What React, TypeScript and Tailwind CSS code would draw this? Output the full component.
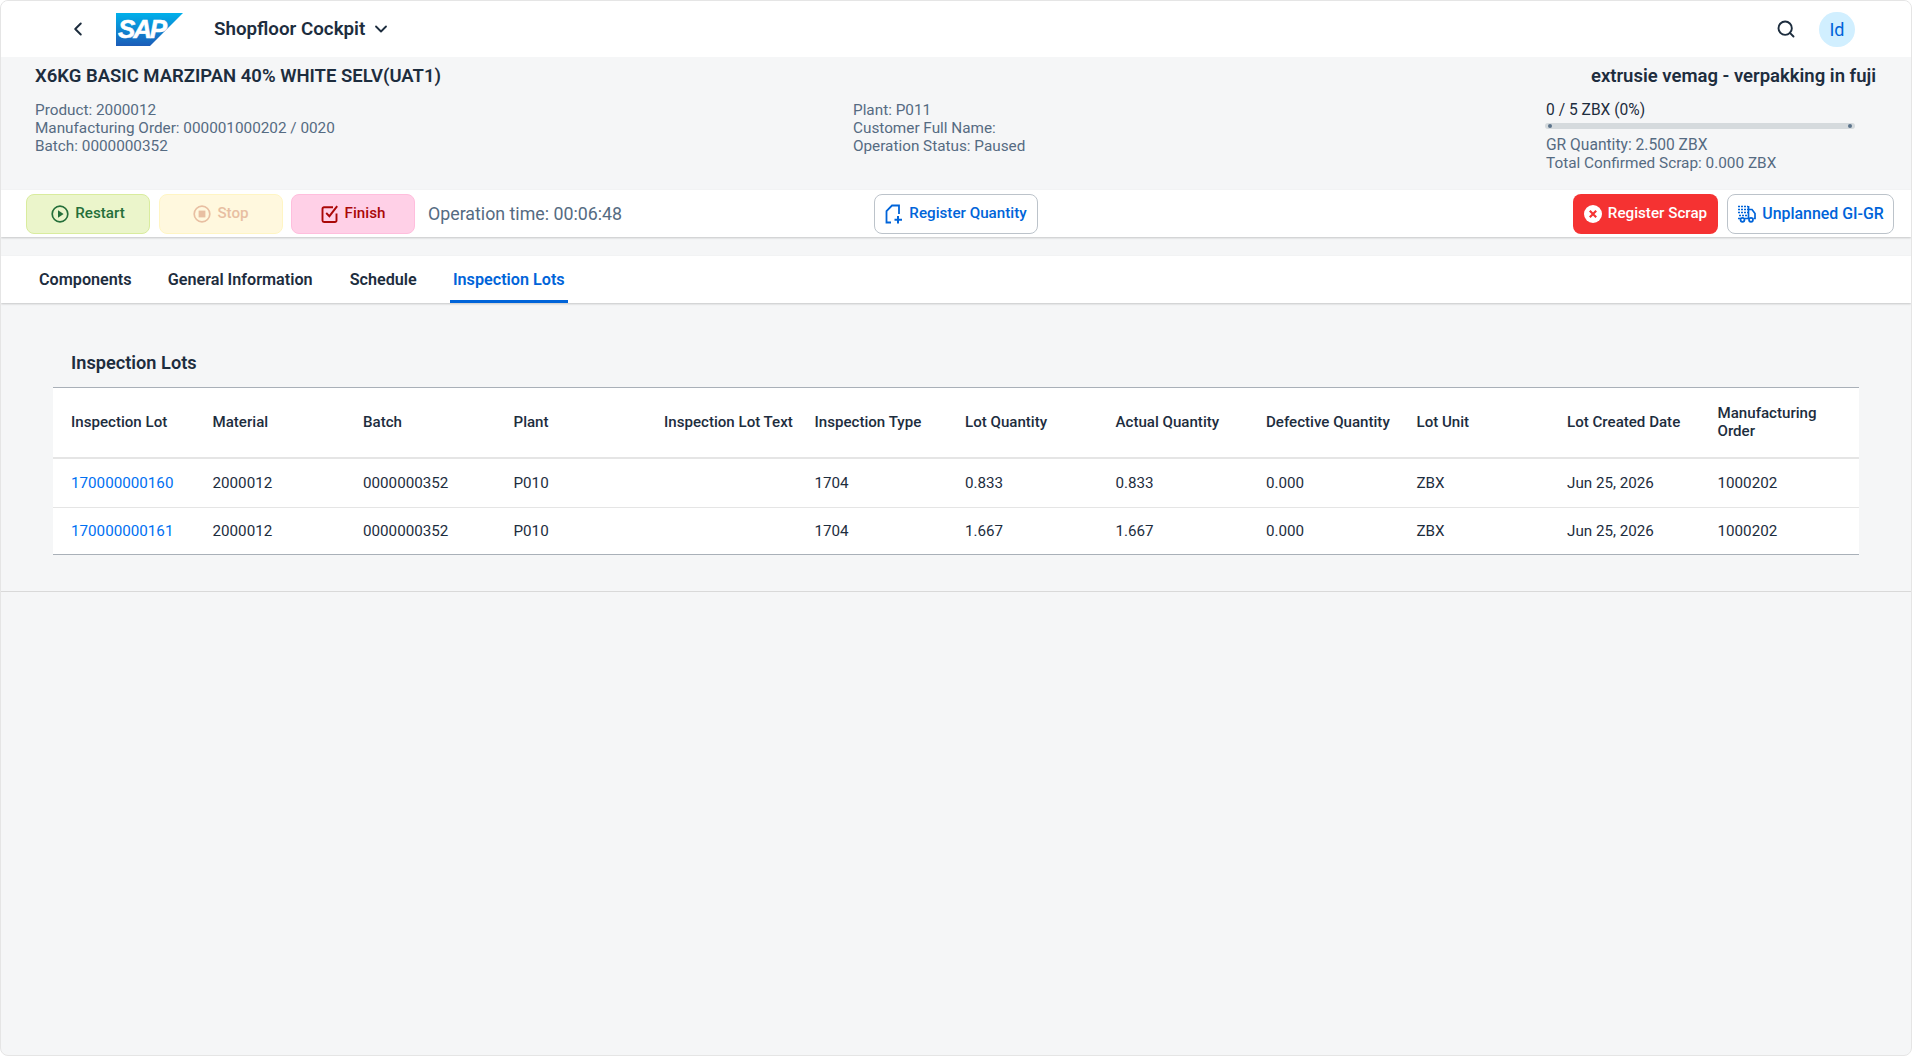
import { ChevronDown, ChevronLeft, Search } from "lucide-react";

const font = "font-['Roboto',sans-serif]";

const columns = [
  "Inspection Lot",
  "Material",
  "Batch",
  "Plant",
  "Inspection Lot Text",
  "Inspection Type",
  "Lot Quantity",
  "Actual Quantity",
  "Defective Quantity",
  "Lot Unit",
  "Lot Created Date",
  "Manufacturing Order",
];

const rows = [
  ["170000000160", "2000012", "0000000352", "P010", "", "1704", "0.833", "0.833", "0.000", "ZBX", "Jun 25, 2026", "1000202"],
  ["170000000161", "2000012", "0000000352", "P010", "", "1704", "1.667", "1.667", "0.000", "ZBX", "Jun 25, 2026", "1000202"],
];

const SapLogo = () => (
  <div className="relative h-[33px] w-[67px] overflow-hidden">
    <svg width="67" height="33" viewBox="0 0 67 33" className="block">
      <defs>
        <linearGradient id="sap" x1="0" y1="0" x2="0" y2="1">
          <stop offset="0" stopColor="#00b1eb" />
          <stop offset="1" stopColor="#1c5cb8" />
        </linearGradient>
      </defs>
      <polygon points="0,0 67,0 34,33 0,33" fill="url(#sap)" />
    </svg>
    <span className="absolute left-[2px] top-[3px] font-['Liberation_Sans',sans-serif] text-[26px] leading-[27px] font-bold italic tracking-[-2.2px] text-white [-webkit-text-stroke:0.5px_white]">
      SAP
    </span>
  </div>
);

const PlayIcon = () => (
  <svg width="18" height="18" viewBox="0 0 18 18" fill="none">
    <circle cx="9" cy="9" r="7.8" stroke="#256f3a" strokeWidth="1.7" />
    <path d="M7 5.2 12.6 9 7 12.8Z" fill="#256f3a" />
  </svg>
);

const StopIcon = () => (
  <svg width="18" height="18" viewBox="0 0 18 18" fill="none">
    <circle cx="9" cy="9" r="7.8" stroke="#e8bfa2" strokeWidth="1.7" />
    <rect x="5.6" y="5.6" width="6.8" height="6.8" fill="#e8bfa2" />
  </svg>
);

const FinishIcon = () => (
  <svg width="18" height="18" viewBox="0 0 18 18" fill="none">
    <path d="M12 2.2H3a1.5 1.5 0 0 0-1.5 1.5v11.8A1.5 1.5 0 0 0 3 17h11a1.5 1.5 0 0 0 1.5-1.5V8.5" stroke="#aa0808" strokeWidth="1.9" />
    <path d="M5.2 8 8.4 11.2 16.2 1.2" stroke="#aa0808" strokeWidth="1.9" />
  </svg>
);

const QuantityIcon = () => (
  <svg width="18" height="20" viewBox="0 0 18 20" fill="none">
    <path d="M6 18.5H1.5V7L7 1.5h7V10" stroke="#0064d9" strokeWidth="1.8" />
    <path d="M13 12v7.5M9.5 15.7h7.5" stroke="#0064d9" strokeWidth="2" />
  </svg>
);

const ScrapIcon = () => (
  <svg width="18" height="18" viewBox="0 0 18 18">
    <circle cx="9" cy="9" r="9" fill="#ffffff" />
    <path d="M5.8 5.8 12.2 12.2M12.2 5.8 5.8 12.2" stroke="#f53232" strokeWidth="2.2" />
  </svg>
);

const TruckIcon = () => (
  <svg width="19" height="18" viewBox="0 0 19 18" fill="none">
    <path d="M1 1.5h10M1 4.5h10M1 7.5h10M2 10.5h9" stroke="#0064d9" strokeWidth="1.6" strokeDasharray="2 1" />
    <path d="M11.5 1v12M11.5 4.5h3.5l3 4v5h-1.5M1 13.5h2.5M8 13.5h4" stroke="#0064d9" strokeWidth="1.7" />
    <circle cx="5.5" cy="14.8" r="2" stroke="#0064d9" strokeWidth="1.7" />
    <circle cx="14" cy="14.8" r="2" stroke="#0064d9" strokeWidth="1.7" />
  </svg>
);

const App = () => {
  return (
    <div className={`${font} flex h-[1056px] w-[1912px] flex-col overflow-hidden rounded-lg border border-[#e5e5e5] bg-[#f5f6f7] text-[#1d2d3e]`}>
      {/* Top bar */}
      <header className="flex h-[56px] shrink-0 items-center bg-white">
        <ChevronLeft size={22} strokeWidth={2.2} className="ml-[66px] text-[#1d2d3e]" />
        <div className="ml-[27px]">
          <SapLogo />
        </div>
        <div className="ml-[31px] flex items-center gap-[6px]">
          <span className="text-[18.75px] font-semibold">Shopfloor Cockpit</span>
          <ChevronDown size={20} strokeWidth={2.2} />
        </div>
        <Search size={20} strokeWidth={2.3} className="ml-auto" />
        <div className="mr-[56px] ml-[23px] flex h-[35px] w-[36px] items-center justify-center rounded-full bg-[#d1efff] text-[18px] font-normal text-[#0064d9]">
          Id
        </div>
      </header>

      {/* Order summary */}
      <section className="h-[133px] shrink-0 pt-[7px] pr-[35px] pl-[34px]">
        <div className="flex items-center justify-between text-[18.5px] leading-[24px] font-semibold">
          <span>X6KG BASIC MARZIPAN 40% WHITE SELV(UAT1)</span>
          <span>extrusie vemag - verpakking in fuji</span>
        </div>
        <div className="mt-[13px] flex text-[15.3px] leading-[18px] text-[#556b82]">
          <div className="w-[818px]">
            <div>Product: 2000012</div>
            <div>Manufacturing Order: 000001000202 / 0020</div>
            <div>Batch: 0000000352</div>
          </div>
          <div className="w-[692px]">
            <div>Plant: P011</div>
            <div>Customer Full Name:</div>
            <div>Operation Status: Paused</div>
          </div>
          <div className="w-[310px] text-[15.6px]">
            <div className="pl-[1px] text-[#1d2d3e]">0 / 5 ZBX (0%)</div>
            <div className="mt-[4px] mb-[7px] flex h-[6px] items-center justify-between rounded-full bg-[#d5dadd] px-[3px]">
              <span className="h-[4px] w-[4px] rounded-full bg-[#5b738b]" />
              <span className="h-[4px] w-[4px] rounded-full bg-[#5b738b]" />
            </div>
            <div className="pl-[1px]">GR Quantity: 2.500 ZBX</div>
            <div className="pl-[1px] text-[15.35px]">Total Confirmed Scrap: 0.000 ZBX</div>
          </div>
        </div>
      </section>

      {/* Actions */}
      <section className="relative flex h-[47px] shrink-0 items-center bg-white pr-[17px] pl-[25px] text-[15.2px] font-medium shadow-[0_1px_2px_rgba(0,0,0,0.2)]">
        <div className="flex w-[848px] items-center">
          <button className="flex h-[40px] w-[124px] items-center justify-center gap-[6px] rounded-lg border border-[#d9ec9e] bg-[#ebf5cb] text-[#256f3a]">
            <PlayIcon />
            Restart
          </button>
          <button className="ml-[9px] flex h-[40px] w-[124px] items-center justify-center gap-[6px] rounded-lg border border-[#fff5c4] bg-[#fff8de] text-[#e8bfa2]">
            <StopIcon />
            Stop
          </button>
          <button className="ml-[8px] flex h-[40px] w-[124px] items-center justify-center gap-[6px] rounded-lg border border-[#ffbedd] bg-[#ffd0e7] text-[#aa0808]">
            <FinishIcon />
            Finish
          </button>
          <span className="ml-[13px] pt-[2px] text-[17.8px] font-normal text-[#556b82]">Operation time: 00:06:48</span>
        </div>
        <button className="flex h-[40px] w-[164px] items-center justify-center gap-[6px] rounded-lg border border-[#bcc3ca] bg-white text-[#0064d9]">
          <QuantityIcon />
          Register Quantity
        </button>
        <button className="ml-auto flex h-[40px] w-[145px] items-center justify-center gap-[6px] rounded-lg bg-[#f53232] text-white">
          <ScrapIcon />
          Register Scrap
        </button>
        <button className="ml-[9px] flex h-[40px] w-[167px] items-center justify-center gap-[6px] rounded-lg border border-[#bcc3ca] bg-white text-[15.9px] text-[#0064d9]">
          <TruckIcon />
          Unplanned GI-GR
        </button>
      </section>

      {/* Tabs */}
      <nav className="mt-[19px] flex h-[47px] shrink-0 bg-white pl-[35px] text-[16.2px] font-semibold shadow-[0_1px_2px_rgba(0,0,0,0.2)]">
        <div className="flex items-center px-[3px] pt-[1px]">Components</div>
        <div className="ml-[30px] flex items-center px-[3px] pt-[1px]">General Information</div>
        <div className="ml-[31px] flex items-center px-[3px] pt-[1px]">Schedule</div>
        <div className="ml-[30px] flex w-[118px] items-center justify-center border-b-[3px] border-[#0064d9] pt-[4px] text-[#0064d9]">Inspection Lots</div>
      </nav>

      {/* Inspection lots */}
      <main className="border-b border-[#d9d9d9] pt-[47px] pr-[52px] pb-[36px] pl-[52px]">
        <h2 className="pl-[18px] text-[18.2px] leading-[26px] font-semibold">Inspection Lots</h2>
        <table className="mt-[11px] w-full table-fixed border-t border-b border-[#a9b0b8] bg-white text-[15.2px] leading-[18px]">
          <thead>
            <tr className="h-[70px] border-b-2 border-[#e5e5e5]">
              {columns.map((c) => (
                <th key={c} className="px-[9px] text-left text-[15.1px] font-medium first:pl-[18px]">{c}</th>
              ))}
            </tr>
          </thead>
          <tbody>
            {rows.map((row, idx) => (
              <tr key={row[0]} className={idx === 0 ? "h-[50px] border-b border-[#e5e5e5]" : "h-[47px]"}>
                {row.map((cell, i) => (
                  <td key={i} className={i === 0 ? "pr-[9px] pl-[18px] text-[#0070f2]" : "px-[9px]"}>{cell}</td>
                ))}
              </tr>
            ))}
          </tbody>
        </table>
      </main>
    </div>
  );
};

export default App;
